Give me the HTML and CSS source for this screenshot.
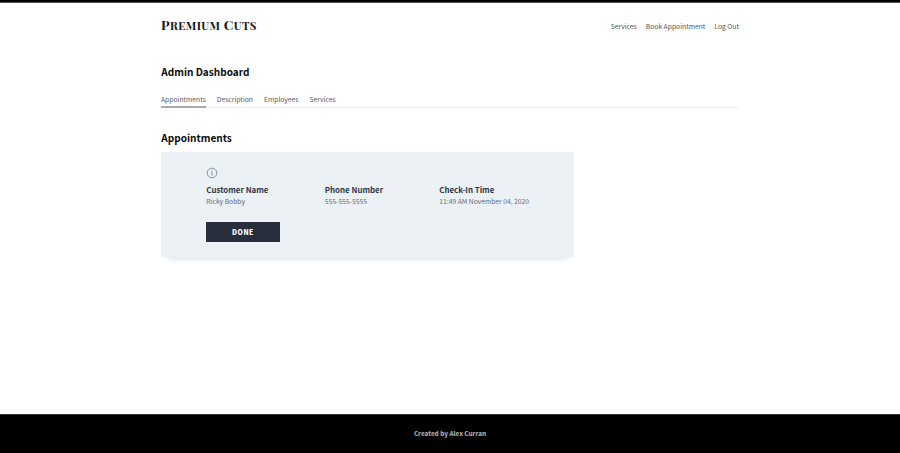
FILE: index.html
```html
<!DOCTYPE html>
<html lang="en">
<head>
<meta charset="utf-8">
<title>Premium Cuts</title>
<link rel="stylesheet" href="styles.css">
</head>
<body>
<header class="header">
  <a class="logo">P<span class="small">REMIUM</span> C<span class="small">UTS</span></a>
  <nav class="nav"><a>Services</a><a>Book Appointment</a><a>Log Out</a></nav>
</header>
<main class="main">
  <h1 class="title">Admin Dashboard</h1>
  <div class="tabs"><a class="tab active">Appointments</a><a class="tab">Description</a><a class="tab">Employees</a><a class="tab">Services</a></div>
  <h2 class="title section">Appointments</h2>
  <section class="card">
    <svg class="info" viewBox="0 0 24 24" fill="none" stroke="currentColor" stroke-width="2"><circle cx="12" cy="12" r="9.6"/><path d="M10.5 11H12v5h2M12 7v2"/></svg>
    <div class="fields">
      <div><h3 class="label">Customer Name</h3><p class="value">Ricky Bobby</p></div>
      <div><h3 class="label">Phone Number</h3><p class="value">555-555-5555</p></div>
      <div><h3 class="label">Check-In Time</h3><p class="value">11:49 AM November 04, 2020</p></div>
    </div>
    <button class="done">DONE</button>
  </section>
</main>
<footer class="footer"><span>Created by Alex Curran</span></footer>
</body>
</html>
```
FILE: styles.css
```css
* { box-sizing: border-box; margin: 0; padding: 0; }
html { background: #fff; }
body { height: 453px; display: flex; flex-direction: column; border-top: 2px solid #000; background: linear-gradient(#555 1px, #fff 1px); background-origin: padding-box; background-repeat: no-repeat; font-family: "Noto Sans CJK JP", "Noto Sans", sans-serif; font-size: 6.75px; color: #555; overflow: hidden; }
.header, .main { width: 578px; margin-left: 161px; }
.header { height: 48px; display: flex; align-items: center; justify-content: space-between; }
.logo { font-family: "Playfair Display SC", "Liberation Serif", serif; font-weight: 700; font-size: 13.4px; line-height: 16px; letter-spacing: .4px; margin-top: -2px; color: #161616; white-space: nowrap; }
.small { font-size: 11.3px; }
.nav { display: flex; gap: 9px; line-height: 10px; white-space: nowrap; }
.main { flex: 1; }
.title { font-size: 10.05px; line-height: 14px; font-weight: 700; color: #0c0c0c; margin-top: 15px; padding-left: .3px; }
.tabs { display: flex; gap: 11px; height: 15px; margin-top: 14px; border-bottom: 1px solid #ededed; }
.tab { height: 15px; line-height: 13px; white-space: nowrap; color: #5c5c5c; }
.active { border-bottom: 2px solid #aaa; }
.section { margin-top: 23px; }
.card { width: 413px; height: 105px; margin-top: 7px; padding: 15px 45px 0; background: #ebf1f5; box-shadow: 0 8px 6px -6px rgba(0,0,0,.12); }
.info { display: block; width: 12px; height: 12px; color: #8290a3; }
.fields { display: grid; grid-template-columns: 118.5px 114.5px 1fr; margin: 5px 0 0 .3px; white-space: nowrap; }
.label { font-size: 7.9px; line-height: 12px; font-weight: 700; color: #2d3748; }
.value { line-height: 11px; color: #626d7c; }
.done { display: block; width: 74px; height: 20px; margin-top: 15px; border: 0; background: #272f3d; color: #fff; font-family: inherit; font-size: 6.8px; line-height: 20px; font-weight: 900; letter-spacing: .5px; text-align: center; }
.footer { height: 39px; flex: none; display: flex; align-items: center; justify-content: center; background: #000; color: #a6a6a6; font-size: 6.25px; font-weight: 900; line-height: 10px; border-top: 1px solid #333; }
```
